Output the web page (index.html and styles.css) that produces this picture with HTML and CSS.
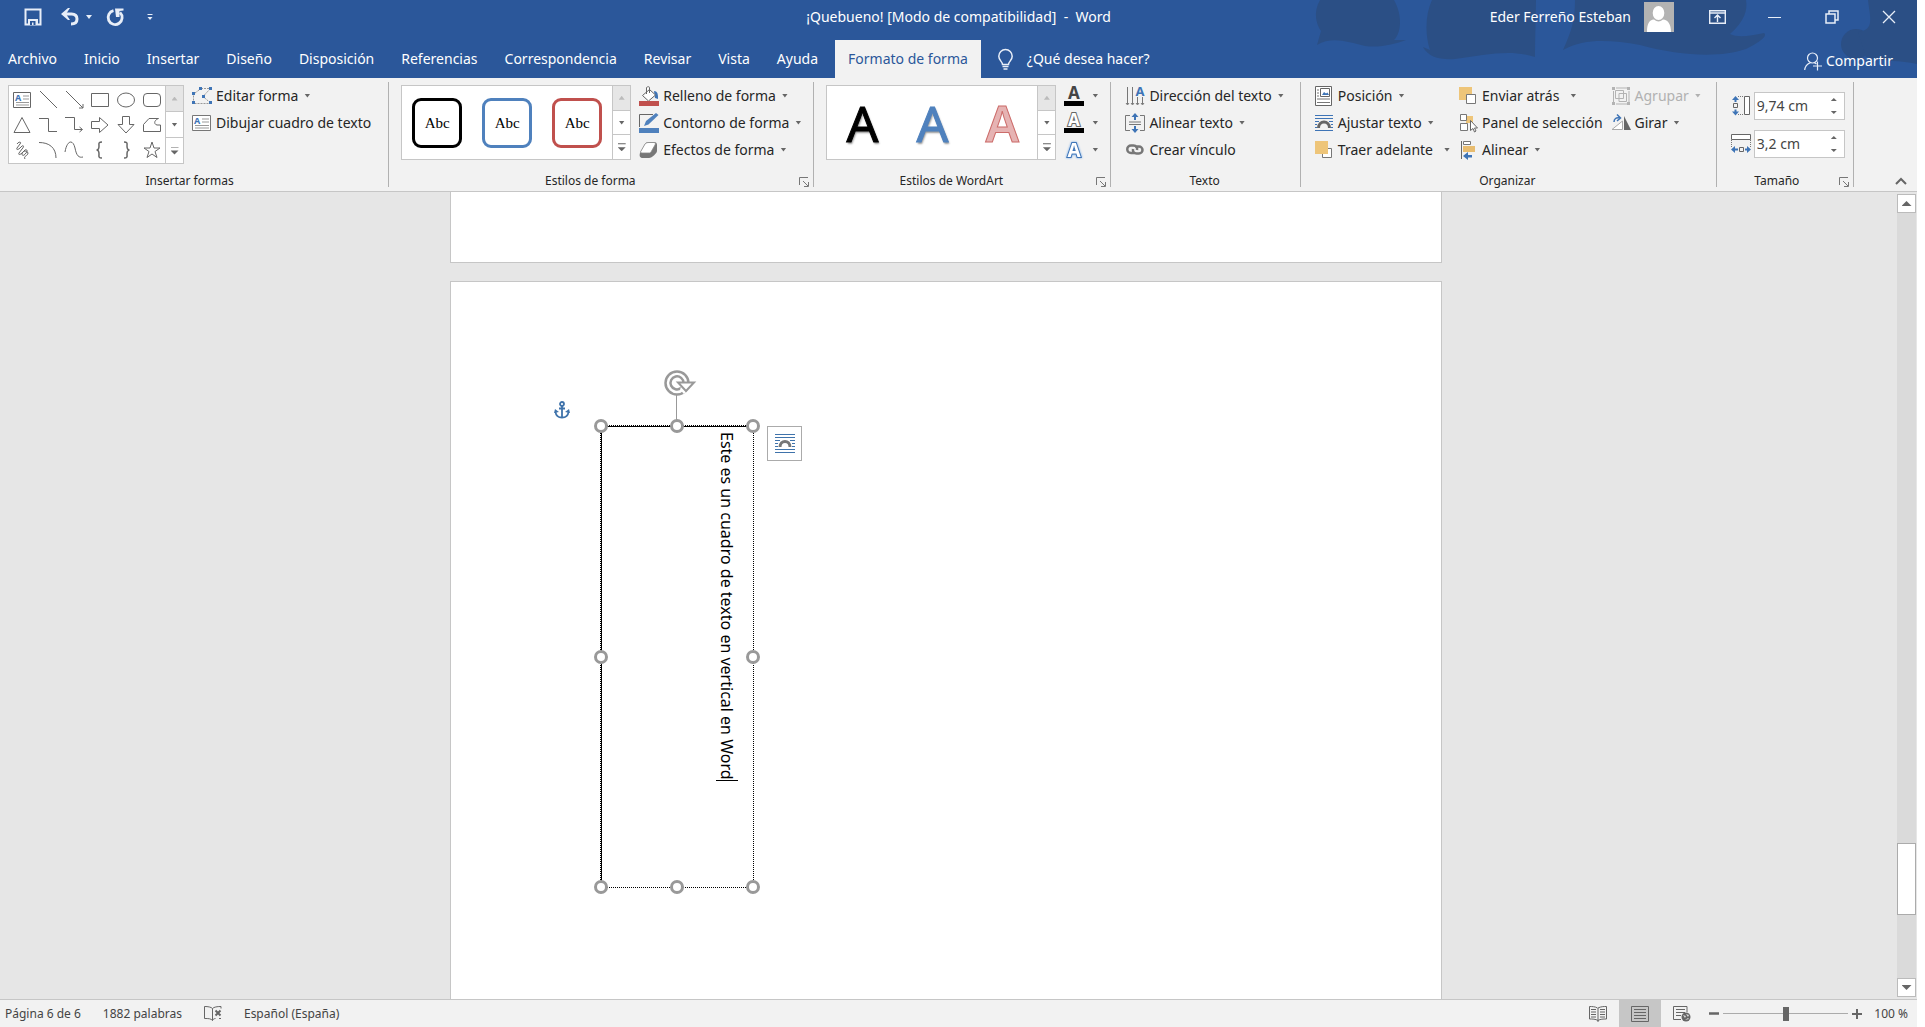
FILE: index.html
```html
<!DOCTYPE html>
<html lang="es">
<head>
    <meta charset="UTF-8">
    <meta name="viewport" content="width=device-width, initial-scale=1.0">
    <title>¡Quebueno! [Modo de compatibilidad] - Word</title>
    <link rel="stylesheet" href="styles.css">
</head>
<body>
    <div class="app">
        <header class="header">
            <svg class="header-art" width="607" height="78" viewBox="0 0 607 78">
                <path d="M10 0C3 12 6 24 11 31L7 45C22 36 38 42 55 46C70 48 85 44 96 40L84 40C92 32 92 14 84 0Z" />
                <path d="M122 0C115 15 115 35 120 50L113 47C118 57 130 60 145 59C175 55 200 49 225 57L225 50L226 0Z" />
                <path d="M265 0C265 20 262 30 253 50C275 38 300 40 330 45C370 56 410 58 436 49C450 42 458 36 454 33C440 36 428 38 420 34C434 22 438 10 436 0Z" />
                <circle cx="546" cy="44" r="15" />
                <path d="M548 32C565 30 560 18 558 0H607V64C590 60 575 62 556 57Z" />
            </svg>

            <div class="title-bar">
                <div class="quick">
                    <button class="icon-btn" aria-label="Guardar">
                        <svg width="18" height="18" viewBox="0 0 18 18"><path d="M1.500 1.500h15v15h-15z" fill="none" stroke="#e8eef8" stroke-width="2"/><path d="M4 11h10v5H4z" fill="#e8eef8"/><path d="M6 13h5.500v4H9.500v-2.500H8V17H6z" fill="#2b579a"/></svg>
                    </button>
                    <button class="icon-btn undo" aria-label="Deshacer">
                        <svg width="18" height="18" viewBox="0 0 18 18"><path d="M3 6h7.500c3.500 0 5.500 2 5.500 5s-2 5-6 5" fill="none" stroke="#e8eef8" stroke-width="3"/><path d="M0 6L7 0h2L5 6l4 6H7z" fill="#e8eef8"/></svg>
                        <i class="caret"></i>
                    </button>
                    <button class="icon-btn" aria-label="Repetir">
                        <svg width="18" height="18" viewBox="0 0 18 18"><path d="M6.500 2.700A7 7 0 1 0 13 4.500" fill="none" stroke="#e8eef8" stroke-width="2.800"/><path d="M8 0.500h8.500v2l-4 .5v6H9z" fill="#e8eef8"/></svg>
                    </button>
                    <button class="icon-btn custom" aria-label="Personalizar barra">
                        <svg width="6" height="7" viewBox="0 0 6 7"><path d="M.5 0h5v1h-5zM.5 3h5L3 6z" fill="#e8eef8"/></svg>
                    </button>
                </div>
                <div class="title">¡Quebueno! [Modo de compatibilidad]&nbsp; -&nbsp; Word</div>
                <div class="account">
                    <span class="user">Eder Ferreño Esteban</span>
                    <svg class="avatar" width="30" height="30" viewBox="0 0 30 30"><path d="M0 0h30v30H0z" fill="#b3b3b3"/><ellipse cx="14.500" cy="11" rx="5.800" ry="7" fill="#fff"/><path d="M3 30c0-8 2-12 7-12.500 3 2.500 6 2.500 9 0 5 .5 8 4.500 8 12.500z" fill="#fff"/></svg>
                    <button class="win-btn" aria-label="Opciones de la cinta">
                        <svg width="17" height="14" viewBox="0 0 17 14"><path d="M.7.7h15.600v12.600H.7zM.7 3h15.600M8.500 12V5.500M5.500 8l3-3 3 3" fill="none" stroke="#e8eef8" stroke-width="1.400"/></svg>
                    </button>
                    <button class="win-btn" aria-label="Minimizar">
                        <svg width="13" height="14" viewBox="0 0 13 14"><path d="M0 7.500h13" stroke="#e8eef8"/></svg>
                    </button>
                    <button class="win-btn" aria-label="Restaurar">
                        <svg width="14" height="14" viewBox="0 0 14 14"><path d="M1 4h9v9H1zM4 4V1h9v9h-3" fill="none" stroke="#e8eef8" stroke-width="1.500"/></svg>
                    </button>
                    <button class="win-btn" aria-label="Cerrar">
                        <svg width="14" height="14" viewBox="0 0 14 14"><path d="M1 1l12 12M13 1L1 13" stroke="#e8eef8" stroke-width="1.300"/></svg>
                    </button>
                </div>
            </div>

            <nav class="tabs">
                <a href="#">Archivo</a>
                <a href="#">Inicio</a>
                <a href="#">Insertar</a>
                <a href="#">Diseño</a>
                <a href="#">Disposición</a>
                <a href="#">Referencias</a>
                <a href="#">Correspondencia</a>
                <a href="#">Revisar</a>
                <a href="#">Vista</a>
                <a href="#">Ayuda</a>
                <a href="#" class="active">Formato de forma</a>
                <button class="tell-me">
                    <svg width="15" height="21" viewBox="0 0 15 21"><path d="M4.500 15.500c0-3-3.700-4-3.700-8.200a6.700 6.700 0 0 1 13.400 0c0 4.200-3.700 5.200-3.700 8.200z" fill="none" stroke="#e8eef8" stroke-width="1.500"/><path d="M4.500 17.500h6M5.500 20h4" stroke="#e8eef8" stroke-width="1.300"/></svg>
                    ¿Qué desea hacer?
                </button>
                <button class="share">
                    <svg width="18" height="19" viewBox="0 0 18 19"><circle cx="8.500" cy="6" r="5" fill="none" stroke="#e8eef8" stroke-width="1.200"/><path d="M.7 18c.3-3.500 2.500-6 5.500-7.300M10.500 10.700l2 1.300M13.500 9.500v9M9 14h9" fill="none" stroke="#e8eef8" stroke-width="1.200"/></svg>
                    Compartir
                </button>
            </nav>
        </header>

        <div class="ribbon">
            <section class="group">
                <div class="group-body">
                    <div class="gallery">
                        <div class="shapes">
                            <svg viewBox="0 0 20 20"><path d="M1.500 2.500h17v15h-17z" /><path d="M11 6h6M11 9h6M4 12.500h13M4 15h13" stroke="#999"/><text x="3" y="11" class="mini-a">A</text></svg>
                            <svg viewBox="0 0 20 20"><path d="M2 1l17 17"/></svg>
                            <svg viewBox="0 0 20 20"><path d="M2 1l17 17M19 14v4h-4"/></svg>
                            <svg viewBox="0 0 20 20"><path d="M1.500 3.500h17v13h-17z"/></svg>
                            <svg viewBox="0 0 20 20"><ellipse cx="10" cy="10" rx="8.500" ry="7"/></svg>
                            <svg viewBox="0 0 20 20"><rect x="1.500" y="3.500" width="17" height="13" rx="3.500"/></svg>
                            <svg viewBox="0 0 20 20"><path d="M10 2.500l8 15H2z"/></svg>
                            <svg viewBox="0 0 20 20"><path d="M1 3.500h9.500v13H19"/></svg>
                            <svg viewBox="0 0 20 20"><path d="M1 2.500h9.500v12H18M15.500 12l3 2.500-3 2.500"/></svg>
                            <svg viewBox="0 0 20 20"><path d="M1.500 6.500h8v-4l8.500 7.500-8.500 7.500v-4h-8z"/></svg>
                            <svg viewBox="0 0 20 20"><path d="M6.500 1.500h7v8H18l-8 8.500-8-8.500h4.500z"/></svg>
                            <svg viewBox="0 0 20 20"><path d="M1.500 9.500L7 3.500h9.500c-5 2-4.500 6-1.500 6.500h3.500v6.500h-17z"/></svg>
                            <svg viewBox="0 0 20 20"><path d="M5 4c2-3 5-2 3 0L5 8c-1 2 1 2 3 0l2-2c2-1 2 1 0 3l-3 4c-1 2 1 2 3 0l3-3c2-1 3 1 1 3-2 3-4 3-4 1 0-3 5-4 6-1 0 3-5 3-3 6"/></svg>
                            <svg viewBox="0 0 20 20"><path d="M1 2.500c10 0 17 5 17 15.500"/></svg>
                            <svg viewBox="0 0 20 20"><path d="M1 12C3 0 9-1 11 8c1.500 8 4 10 8 9"/></svg>
                            <svg viewBox="0 0 20 20"><path d="M12 2c-4 0-3 2-3 4s0 4-2.500 4C9 10 9 12 9 14s-1 4 3 4" stroke-width="1.500"/></svg>
                            <svg viewBox="0 0 20 20"><path d="M8 2c4 0 3 2 3 4s0 4 2.500 4C11 10 11 12 11 14s1 4-3 4" stroke-width="1.500"/></svg>
                            <svg viewBox="0 0 20 20"><path d="M10 2l2 6h6l-5 3.500 2 6-5-3.500-5 3.500 2-6L2 8h6z"/></svg>
                        </div>
                        <div class="gallery-side">
                            <button disabled aria-label="Subir"><i class="caret up"></i></button>
                            <button aria-label="Bajar"><i class="caret"></i></button>
                            <button aria-label="Más"><i class="caret bar"></i></button>
                        </div>
                    </div>
                    <div class="commands">
                        <button>
                            <svg viewBox="0 0 20 18"><path d="M1.500 5.500v11h17M3 6l6-4.500M9 1.500h9M18 2l-7 7.500 7 6" fill="none" stroke="#999" stroke-dasharray="2 1"/><path d="M0 5h3v3H0zM0 14h3v3H0zM7 0h3v3H7zM17 0h3v3h-3zM17 14h3v3h-3zM10 8h3v3h-3z" fill="#3e74b6"/></svg>
                            Editar forma<i class="caret"></i>
                        </button>
                        <button>
                            <svg viewBox="0 0 20 18"><path d="M.5 1.500h18v15H.5z" fill="#fff" stroke="#777"/><path d="M10 5h7M10 8h7M3 11.500h14M3 14h14" stroke="#999"/><text x="2" y="10" class="mini-a">A</text></svg>
                            Dibujar cuadro de texto
                        </button>
                    </div>
                </div>
                <div class="group-label">Insertar formas</div>
            </section>

            <section class="group">
                <div class="group-body">
                    <div class="gallery">
                        <div class="styles">
                            <button class="style black">Abc</button>
                            <button class="style blue">Abc</button>
                            <button class="style red">Abc</button>
                        </div>
                        <div class="gallery-side">
                            <button disabled aria-label="Subir"><i class="caret up"></i></button>
                            <button aria-label="Bajar"><i class="caret"></i></button>
                            <button aria-label="Más"><i class="caret bar"></i></button>
                        </div>
                    </div>
                    <div class="commands">
                        <button>
                            <svg viewBox="0 0 20 20"><path d="M15 5c4 0 4 4 4 8l-3-1z" fill="#3e74b6"/><path d="M3.500 9.500l7-6 6 5.500-7 6zM7.500 8V1.500c1-1 3-1 3 0V7" fill="#fff" stroke="#666"/><path d="M0 15h20v5H0z" fill="#c0504d"/></svg>
                            Relleno de forma<i class="caret"></i>
                        </button>
                        <button>
                            <svg viewBox="0 0 20 20"><path d="M.5 14V1.500H14" fill="none" stroke="#666"/><path d="M5 13l2-5L17 0l2.500 2L9.500 11.500z" fill="#4f81bd"/><path d="M0 15h20v5H0z" fill="#4f81bd"/></svg>
                            Contorno de forma<i class="caret"></i>
                        </button>
                        <button>
                            <svg viewBox="0 0 20 20"><path d="M1 13L6 4c1-1.500 2-2 4-2h5c2 0 3 1 3 3v6c0 2-5 7-8 7H4c-3 0-4-2-3-5z" fill="#777"/><path d="M2 11l4-7c1-1 2-1.500 4-1.500h5c1 0 2 1 1 2.500l-4 7c-1 1-1 1-3 1H3c-1 0-2-1-1-2z" fill="#fff" stroke="#888" stroke-width=".8"/></svg>
                            Efectos de forma<i class="caret"></i>
                        </button>
                    </div>
                </div>
                <div class="group-label has-launcher">Estilos de forma
                    <button class="launcher" aria-label="Formato de forma"><svg width="10" height="10" viewBox="0 0 10 10"><path d="M.5 8V.5H9M4 4l5 5M9.500 5v4.500H5" fill="none" stroke="#777"/></svg></button>
                </div>
            </section>

            <section class="group">
                <div class="group-body">
                    <div class="gallery">
                        <div class="styles">
                            <button class="wordart black">A</button>
                            <button class="wordart blue">A</button>
                            <button class="wordart pink">A</button>
                        </div>
                        <div class="gallery-side">
                            <button disabled aria-label="Subir"><i class="caret up"></i></button>
                            <button aria-label="Bajar"><i class="caret"></i></button>
                            <button aria-label="Más"><i class="caret bar"></i></button>
                        </div>
                    </div>
                    <div class="commands icons-only">
                        <button aria-label="Relleno de texto"><svg viewBox="0 0 20 20"><text x="10" y="13" class="glyph-a">A</text><path d="M0 15h20v5H0z"/></svg><i class="caret"></i></button>
                        <button aria-label="Contorno de texto"><svg viewBox="0 0 20 20"><text x="10" y="13" class="glyph-a hollow">A</text><path d="M0 15h20v5H0z"/></svg><i class="caret"></i></button>
                        <button aria-label="Efectos de texto"><svg viewBox="0 0 20 20"><text x="10" y="17" class="glyph-a glow">A</text></svg><i class="caret"></i></button>
                    </div>
                </div>
                <div class="group-label has-launcher">Estilos de WordArt
                    <button class="launcher" aria-label="Formato de texto"><svg width="10" height="10" viewBox="0 0 10 10"><path d="M.5 8V.5H9M4 4l5 5M9.500 5v4.500H5" fill="none" stroke="#777"/></svg></button>
                </div>
            </section>

            <section class="group text-group">
                <div class="group-body">
                    <div class="commands">
                        <button>
                            <svg viewBox="0 0 20 20"><path d="M2.500 1v17M7.500 1v17M12.500 11v7M17.500 11v7M1 17l1.500 2L4 17M6 17l1.500 2L9 17M11 17l1.500 2 1.500-2M16 17l1.500 2 1.500-2" fill="none" stroke="#777"/><text x="15" y="10" class="mini-a big-a">A</text></svg>
                            Dirección del texto<i class="caret"></i>
                        </button>
                        <button>
                            <svg viewBox="0 0 20 20"><path d="M5 2.500H.5v15H5M15 2.500h4.500v15H15M4 9h12M4 11.500h12" fill="none" stroke="#777"/><path d="M10 0l3.500 4H11v3H9V4H6.500zM10 20l3.500-4H11v-3H9v3H6.500z" fill="#3e74b6"/></svg>
                            Alinear texto<i class="caret"></i>
                        </button>
                        <button>
                            <svg viewBox="0 0 20 20"><path d="M10 13H6a3.300 3.300 0 0 1 0-7.500h2.500c3 0 4 2 3.500 4.500M10 6.500h4a3.300 3.300 0 0 1 0 7h-2.500c-2.500 0-4-2-3.500-4.500" fill="none" stroke="#777" stroke-width="2.500"/></svg>
                            Crear vínculo
                        </button>
                    </div>
                </div>
                <div class="group-label">Texto</div>
            </section>

            <section class="group organize">
                <div class="group-body">
                    <div class="commands">
                        <button>
                            <svg viewBox="0 0 20 20"><path d="M1.500.5h16v19h-16z" fill="#fff" stroke="#666"/><path d="M6.500 2.500h9v8h-9z" fill="none" stroke="#666"/><path d="M8 9l2-3 2 1.500 1.500-1L15 9z" fill="#3e74b6"/><path d="M3 4h2M3 7h2M3 10h2M3 13h13M3 16.500h13" stroke="#777"/></svg>
                            Posición<i class="caret"></i>
                        </button>
                        <button>
                            <svg viewBox="0 0 20 20"><path d="M1 2.500h18M1 5.500h18M1 8.500h4M1 11.500h2M1 14.500h2M15 8.500h4M17 11.500h2M17 14.500h2M1 17.500h18" stroke="#3e74b6"/><path d="M4.500 15c0-8 11-8 11 0" fill="none" stroke="#666" stroke-width="3"/></svg>
                            Ajustar texto<i class="caret"></i>
                        </button>
                        <button>
                            <svg viewBox="0 0 20 20"><path d="M8.500 8.500h9v9h-9z" fill="#fff" stroke="#777"/><path d="M1 1h13v13H1z" fill="#eec579"/></svg>
                            Traer adelante<i class="caret split"></i>
                        </button>
                    </div>
                    <div class="commands">
                        <button>
                            <svg viewBox="0 0 20 20"><path d="M1 1h13v13H1z" fill="#eec579"/><path d="M8.500 8.500h9v9h-9z" fill="#fff" stroke="#777"/></svg>
                            Enviar atrás<i class="caret split"></i>
                        </button>
                        <button>
                            <svg viewBox="0 0 20 20"><path d="M8 3h7v7H8z" fill="#eec579"/><path d="M2.500 1.500h6v6h-6zM2.500 10.500h7v7h-7z" fill="#fff" stroke="#777"/><path d="M12.500 7.500v10l2.500-2 1.500 3.500 1.500-1-1.500-3h3z" fill="#fff" stroke="#666"/></svg>
                            Panel de selección
                        </button>
                        <button>
                            <svg viewBox="0 0 20 20"><path d="M3.500 1v18" stroke="#666"/><path d="M5.500 1.500h7v3h-7z" fill="#fff" stroke="#777"/><path d="M5 6h12v6H5z" fill="#e8bc6f"/><path d="M5 16l5-4v3h4v2.500h-4V20z" fill="#3e74b6"/></svg>
                            Alinear<i class="caret"></i>
                        </button>
                    </div>
                    <div class="commands">
                        <button disabled>
                            <svg viewBox="0 0 20 20"><path d="M5 2h11M5 18h11M2.500 5v11M18 5v11M4.500 4.500h8v8h-8zM8 7.500h7.500v8H8z" fill="none" stroke="#b3b3b3"/><path d="M1 1h3v3H1zM16 1h3v3h-3zM1 16h3v3H1zM16 16h3v3h-3z" fill="#b3b3b3"/></svg>
                            Agrupar<i class="caret"></i>
                        </button>
                        <button>
                            <svg viewBox="0 0 20 20"><path d="M13 3l7 14h-7z" fill="#666"/><path d="M11.500 8v8.500H1z" fill="#fff" stroke="#aaa"/><path d="M3 9c0-3 2-5 6-4M6 1.500L9.500 5 6 8" fill="none" stroke="#3e74b6" stroke-width="1.500"/></svg>
                            Girar<i class="caret"></i>
                        </button>
                    </div>
                </div>
                <div class="group-label">Organizar</div>
            </section>

            <section class="group size-group">
                <div class="group-body sizes">
                    <label class="size">
                        <svg viewBox="0 0 20 20"><path d="M13.500.5h5v18h-5z" fill="#fff" stroke="#666"/><path d="M2.500 7.500h4v4h-4z" fill="none" stroke="#666"/><path d="M7 .5h6M7 18.500h6" stroke="#777" stroke-dasharray="1 1"/><path d="M4.500 0L8 4H5.500v2h-2V4H1zM4.500 19.500L8 15.500H5.500v-2h-2v2H1z" fill="#3e74b6"/></svg>
                        <span class="spin"><input type="text" value="9,74 cm" aria-label="Alto de forma"><span><i class="caret up"></i><i class="caret"></i></span></span>
                    </label>
                    <label class="size">
                        <svg viewBox="0 0 20 20"><path d="M.5.500h19v5H.5z" fill="#fff" stroke="#666"/><path d="M8.500 13.500h4v4h-4z" fill="none" stroke="#666"/><path d="M.5 6v7M19.500 6v7" stroke="#777" stroke-dasharray="1 1"/><path d="M0 15.500L4 12v2.500h3v2H4V19zM20 15.500L16 12v2.500h-2v2h2V19z" fill="#3e74b6"/></svg>
                        <span class="spin"><input type="text" value="3,2 cm" aria-label="Ancho de forma"><span><i class="caret up"></i><i class="caret"></i></span></span>
                    </label>
                </div>
                <div class="group-label has-launcher">Tamaño
                    <button class="launcher" aria-label="Diseño"><svg width="10" height="10" viewBox="0 0 10 10"><path d="M.5 8V.5H9M4 4l5 5M9.500 5v4.500H5" fill="none" stroke="#777"/></svg></button>
                </div>
            </section>

            <button class="collapse" aria-label="Contraer la cinta">
                <svg width="12" height="8" viewBox="0 0 12 8"><path d="M1 7l5-5 5 5" fill="none" stroke="#666" stroke-width="2"/></svg>
            </button>
        </div>

        <main class="workspace">
            <div class="canvas">
                <div class="page previous"></div>
                <div class="page current">
                    <svg class="anchor" width="16" height="18" viewBox="0 0 16 18"><circle cx="8" cy="3" r="2" fill="none" stroke="#3f73ab" stroke-width="1.800"/><path d="M8 5v12M5 7.500h6M1.500 11c.5 4 3 5.500 6.500 5.500s6-1.500 6.500-5.500" fill="none" stroke="#3f73ab" stroke-width="1.800"/><path d="M0 12l1-4 4 3zM16 12l-1-4-4 3z" fill="#3f73ab"/></svg>

                    <div class="text-box">
                        <p>Este es un cuadro de texto en vertical en Word</p>
                        <svg class="rotate" width="36" height="60" viewBox="0 0 36 60"><path d="M17.500 28v26" stroke="#999"/><circle cx="18" cy="16" r="11.500" fill="none" stroke="#999" stroke-width="2.500"/><path d="M24.500 16A6.500 6.500 0 1 0 22 21" fill="none" stroke="#999" stroke-width="2.500"/><path d="M22 21l4 5" stroke="#fff" stroke-width="3"/><path d="M19 15.500h16L27 24z" fill="#fff" stroke="#999" stroke-width="2"/></svg>
                        <i class="handle nw"></i>
                        <i class="handle n"></i>
                        <i class="handle ne"></i>
                        <i class="handle w"></i>
                        <i class="handle e"></i>
                        <i class="handle sw"></i>
                        <i class="handle s"></i>
                        <i class="handle se"></i>
                        <button class="layout-options" aria-label="Opciones de diseño">
                            <svg width="20" height="20" viewBox="0 0 20 20"><path d="M0 .5h20M0 3.500h20M0 6.500h5M0 9.500h3M0 12.500h3M15 6.500h5M17 9.500h3M17 12.500h3M0 15.500h20M0 18.500h20" stroke="#3f73ab"/><path d="M5 13c0-7.500 10-7.500 10 0" fill="none" stroke="#777" stroke-width="3"/></svg>
                        </button>
                    </div>
                </div>
            </div>
            <div class="scrollbar">
                <button class="scroll-btn" aria-label="Subir"><i class="caret up"></i></button>
                <div class="track">
                    <div class="thumb"></div>
                </div>
                <button class="scroll-btn" aria-label="Bajar"><i class="caret"></i></button>
            </div>
        </main>

        <footer class="status">
            <span>Página 6 de 6</span>
            <span>1882 palabras</span>
            <button class="proof" aria-label="Revisión">
                <svg width="18" height="15" viewBox="0 0 18 15"><path d="M8.500 2.500C7 1 4 .5.500.500v12c4 0 6.500 0 8 2 .5-1 1.500-2 3-2M8.500 2.500v12M8.500 2.500C10 1 13 .5 17 .5v2M17 12.500h-2" fill="none" stroke="#666"/><path d="M11.500 4.500l5 5M16.500 4.500l-5 5" stroke="#666" stroke-width="2"/></svg>
            </button>
            <span>Español (España)</span>
            <div class="views">
                <button aria-label="Modo de lectura">
                    <svg width="18" height="16" viewBox="0 0 18 16"><path d="M8.500 2C6 .5 3 .5.500.500v12.500c3 0 6 0 8.500 1.500 2.500-1.500 5-1.500 8.500-1.500V.5C14.500.5 12 .5 9 2v14" fill="none" stroke="#666"/><path d="M2 3.500h5M2 6h5M2 8.500h5M2 11h5M11 3.500h5M11 6h5M11 8.500h5M11 11h5" stroke="#666"/></svg>
                </button>
                <button class="selected" aria-label="Diseño de impresión">
                    <svg width="18" height="16" viewBox="0 0 18 16"><path d="M.5.500h17v15H.5zM3 3.500h12M3 6.500h12M3 9.500h12M3 12.500h12" fill="none" stroke="#666"/></svg>
                </button>
                <button aria-label="Diseño web">
                    <svg width="18" height="16" viewBox="0 0 18 16"><path d="M14 6V.5H.5v13H8M3 3.500h9M3 6.500h9M3 9.500h5" fill="none" stroke="#666"/><circle cx="13" cy="11" r="4.500" fill="#666"/><path d="M10 9l3 1-1 2zM13 8l3 1-1 2zM12 14l3-2 1 1z" fill="#ddd"/></svg>
                </button>
            </div>
            <div class="zoom">
                <button aria-label="Alejar"><svg width="10" height="10" viewBox="0 0 10 10"><path d="M0 4.500h10" stroke="#666" stroke-width="2.500"/></svg></button>
                <input type="range" min="0" max="200" value="101" aria-label="Zoom">
                <button aria-label="Acercar"><svg width="10" height="10" viewBox="0 0 10 10"><path d="M0 5h10M5 0v10" stroke="#666" stroke-width="2"/></svg></button>
                <span class="percent">100 %</span>
            </div>
        </footer>
    </div>
</body>
</html>
```
FILE: styles.css
```css
* {
    padding: 0;
    margin: 0;
    box-sizing: border-box;
}

body {
    padding-right: 8px;
    background: #fff;
    font-family: "Noto Sans", "Open Sans", sans-serif;
    font-size: 14px;
    line-height: 20px;
    color: #262626;
}

button {
    border: none;
    background: none;
    font: inherit;
    color: inherit;
    white-space: nowrap;
}

svg {
    display: block;
    flex: none;
    overflow: visible;
}

.app {
    display: flex;
    flex-direction: column;
    height: 100vh;
}

/* arrows */
.caret {
    display: block;
    flex: none;
    width: 6px;
    height: 4px;
    background: #666;
    clip-path: polygon(0 0, 100% 0, 50% 100%);
}

.caret.up {
    clip-path: polygon(50% 0, 100% 100%, 0 100%);
}

.caret.bar {
    width: 8px;
    height: 8px;
    clip-path: polygon(0 0, 100% 0, 100% 1px, 0 1px, 0 4px, 100% 4px, 50% 100%, 0 4px);
}

/* header */
.header {
    position: relative;
    background: #2b579a;
    color: #fff;
}

.header-art {
    position: absolute;
    top: 0;
    right: 0;
    overflow: hidden;
    fill: #2b4f85;
}

.title-bar {
    position: relative;
    display: grid;
    grid-template-columns: 1fr auto 1fr;
    align-items: center;
    height: 34px;
    margin-bottom: 6px;
}

.quick {
    display: flex;
    align-items: center;
    padding-left: 24px;
}

.icon-btn {
    display: flex;
    align-items: center;
    gap: 7px;
}

.icon-btn .caret {
    background: #e8eef8;
}

.icon-btn.undo {
    margin: 0 15px 0 19px;
}

.icon-btn.custom {
    margin-left: 22px;
}

.account {
    display: flex;
    justify-content: flex-end;
    align-items: center;
}

.avatar {
    margin: 0 15px 0 13px;
}

.win-btn {
    display: flex;
    justify-content: center;
    width: 57px;
}

.tabs {
    position: relative;
    display: flex;
    gap: 1px;
    height: 38px;
    line-height: 38px;
    padding-right: 24px;
}

.tabs a {
    padding: 0 13px;
    color: #fff;
    text-decoration: none;
}

.tabs a:first-child {
    padding-left: 8px;
}

.tabs .active {
    margin-left: 3px;
    background: #f2f2f2;
    color: #2b579a;
}

.tell-me,
.share {
    display: flex;
    align-items: center;
    gap: 14px;
    margin-left: 16px;
}

.share {
    gap: 4px;
    margin-left: auto;
    padding-top: 4px;
}

/* ribbon */
.ribbon {
    display: flex;
    height: 114px;
    padding: 4px 0;
    background: #f2f2f2;
    border-bottom: 1px solid #c6c6c6;
}

.group {
    display: flex;
    flex-direction: column;
    justify-content: space-between;
    padding: 0 12px;
    border-right: 1px solid #b1b1b1;
}

.group:first-child {
    padding: 0 17px 0 8px;
}

.group-body {
    display: flex;
    align-items: flex-start;
    gap: 8px;
    padding-top: 3px;
}

.group-label {
    display: flex;
    justify-content: center;
    font-size: 12px;
    line-height: 12px;
}

.has-launcher {
    position: relative;
    padding-right: 22px;
}

.launcher {
    position: absolute;
    right: -8px;
    top: 2px;
}

.gallery {
    display: flex;
    background: #fff;
    border: 1px solid #c6c6c6;
}

.shapes {
    display: grid;
    grid-template-columns: repeat(6, 26px);
    grid-auto-rows: 25px;
    place-items: center;
    padding: 1px 0;
}

.shapes svg {
    width: 20px;
    height: 20px;
    fill: none;
    stroke: #666;
}

.gallery-side {
    display: flex;
    flex-direction: column;
    width: 18px;
    border-left: 1px solid #c6c6c6;
}

.gallery-side button {
    flex: 1;
    display: flex;
    align-items: center;
    justify-content: center;
}

.gallery-side button + button {
    border-top: 1px solid #c6c6c6;
}

.gallery-side button:disabled {
    background: #e6e6e6;
}

.gallery-side button:disabled .caret {
    background: #bbb;
}

.styles {
    display: flex;
    align-items: center;
    gap: 20px;
    height: 73px;
    padding: 0 10px;
}

.style {
    width: 50px;
    height: 50px;
    border: 3px solid #000;
    border-radius: 9px;
    background: #fff;
    font-family: "Liberation Serif", serif;
    font-size: 15px;
    color: #000;
}

.style.blue {
    border-color: #4f81bd;
}

.style.red {
    border-color: #c0504d;
}

.wordart {
    width: 50px;
    font-size: 50px;
    line-height: 50px;
    -webkit-text-stroke: 1px;
    text-shadow: 1px 2px 2px #999;
}

.wordart.black {
    color: #000;
}

.wordart.blue {
    color: #4f81bd;
}

.wordart.pink {
    font-weight: 600;
    color: #e6b3b3;
    text-shadow: none;
    -webkit-text-stroke: 1px #cc6c6a;
}

.commands {
    display: flex;
    flex-direction: column;
    align-items: flex-start;
}

.commands button {
    display: flex;
    align-items: center;
    gap: 4px;
    height: 27px;
    margin-top: -3px;
    margin-bottom: 3px;
}

.commands button:disabled {
    color: #b1b1b1;
}

.commands button:disabled .caret {
    background: #b1b1b1;
}

.commands svg,
.size svg {
    width: 20px;
    height: 20px;
}

.commands .caret {
    margin-left: 2px;
}

.commands .caret.split {
    margin-left: 7px;
}

.icons-only button {
    gap: 6px;
}

.mini-a {
    fill: #3e74b6;
    stroke: none;
    font-size: 9px;
    font-weight: 700;
}

.big-a {
    font-size: 13px;
    text-anchor: middle;
}

.glyph-a {
    fill: #444;
    font-size: 17px;
    font-weight: 700;
    text-anchor: middle;
}

.glyph-a.hollow {
    fill: #fff;
    stroke: #666;
    stroke-width: 2px;
    paint-order: stroke;
}

.glyph-a.glow {
    fill: #fff;
    stroke: #3e74b6;
    stroke-width: 2px;
    paint-order: stroke;
    font-size: 19px;
    filter: drop-shadow(0 0 1px #6aa5e8);
}

.text-group {
    padding: 0 16px 0 14px;
}

.organize {
    padding: 0 15px 0 13px;
}

.organize .group-body {
    gap: 8px;
}

.size-group {
    padding: 0 8px 0 14px;
}

.size-group .launcher {
    right: -4px;
}

.sizes {
    flex-direction: column;
    gap: 10px;
    padding-top: 10px;
}

.size {
    display: flex;
    align-items: center;
    gap: 3px;
}

.spin {
    display: flex;
    align-items: center;
    width: 91px;
    height: 28px;
    padding: 0 7px 0 2px;
    border: 1px solid #c6c6c6;
    background: #fff;
}

.spin input {
    flex: 1;
    min-width: 0;
    border: none;
    outline: none;
    font: inherit;
    color: #444;
}

.spin span {
    display: flex;
    flex-direction: column;
    gap: 10px;
}

.spin .caret {
    height: 3px;
}

.collapse {
    align-self: flex-end;
    margin-left: auto;
    padding: 0 10px 2px 0;
}

/* document */
.workspace {
    flex: 1;
    display: flex;
    min-height: 0;
    background: #e6e6e6;
}

.canvas {
    flex: 1;
    display: flex;
    flex-direction: column;
    align-items: center;
    gap: 18px;
    padding-right: 5px;
    overflow: hidden;
}

.page {
    width: 992px;
    flex: none;
    background: #fff;
    border: 1px solid #c6c6c6;
}

.previous {
    height: 71px;
    border-top: none;
}

.current {
    position: relative;
    flex: 1;
    border-bottom: none;
}

.anchor {
    position: absolute;
    left: 103px;
    top: 119px;
}

.text-box {
    position: absolute;
    left: 149px;
    top: 143px;
    width: 154px;
    height: 463px;
    padding: 6px 15px;
    border: 1px dotted #000;
    box-shadow: inset 1px 1px 0 #000;
    color: #000;
    writing-mode: vertical-rl;
}

.text-box p {
    font-size: 16px;
    line-height: 22px;
    width: 22px;
    max-height: max-content;
    border-bottom: 1px solid #000;
}

.handle {
    position: absolute;
    width: 14px;
    height: 14px;
    margin: -7px;
    border: 3px solid #999;
    border-radius: 50%;
    background: #fff;
}

.nw, .n, .ne { top: 0; }
.w, .e { top: 50%; }
.sw, .s, .se { top: 100%; }
.nw, .w, .sw { left: 0; }
.n, .s { left: 50%; }
.ne, .e, .se { left: 100%; }

.rotate {
    position: absolute;
    left: 50%;
    top: -59px;
    margin-left: -18px;
}

.layout-options {
    position: absolute;
    left: 166px;
    top: 0;
    display: flex;
    align-items: center;
    justify-content: center;
    width: 35px;
    height: 35px;
    border: 1px solid #ababab;
    background: #fff;
    writing-mode: horizontal-tb;
}

.scrollbar {
    display: flex;
    flex-direction: column;
    width: 20px;
    padding: 2px 1px 2px 0;
}

.scroll-btn {
    display: flex;
    align-items: center;
    justify-content: center;
    height: 19px;
    border: 1px solid #bbb;
    background: #fff;
}

.scroll-btn .caret {
    width: 10px;
    height: 5px;
}

.track {
    flex: 1;
    display: flex;
    flex-direction: column;
    justify-content: flex-end;
    padding-bottom: 63px;
    background: #dadada;
}

.thumb {
    height: 72px;
    border: 1px solid #ababab;
    background: #fff;
}

/* status bar */
.status {
    display: flex;
    align-items: center;
    height: 28px;
    padding: 0 9px 0 5px;
    gap: 22px;
    background: #f2f2f2;
    border-top: 1px solid #c6c6c6;
    font-size: 12px;
    color: #444;
}

.views {
    display: flex;
    align-self: stretch;
    margin-left: auto;
}

.views button {
    display: flex;
    align-items: center;
    justify-content: center;
    width: 42px;
}

.views .selected {
    background: #c6c6c6;
}

.zoom {
    display: flex;
    align-items: center;
    gap: 4px;
    margin-left: -16px;
}

.zoom input {
    appearance: none;
    width: 125px;
    height: 14px;
    background: linear-gradient(#ababab, #ababab) center / 100% 1px no-repeat;
}

.zoom input::-webkit-slider-thumb {
    appearance: none;
    width: 6px;
    height: 14px;
    background: #666;
}

.percent {
    margin-left: 8px;
}
```
